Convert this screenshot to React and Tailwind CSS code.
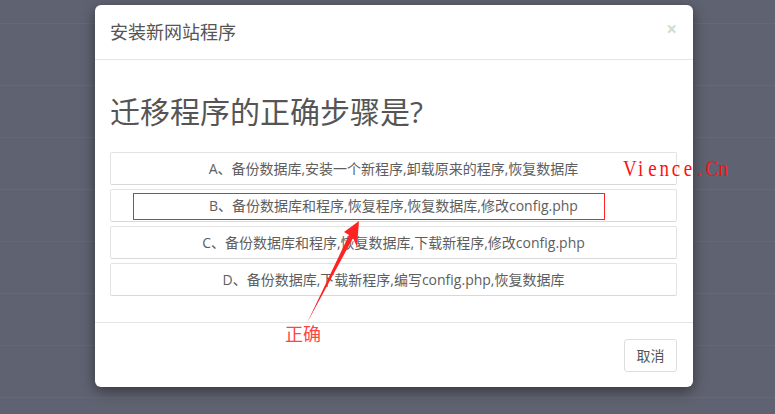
const options = [
  'A、备份数据库,安装一个新程序,卸载原来的程序,恢复数据库',
  'B、备份数据库和程序,恢复程序,恢复数据库,修改config.php',
  'C、备份数据库和程序,恢复数据库,下载新程序,修改config.php',
  'D、备份数据库,下载新程序,编写config.php,恢复数据库',
];

const App = () => {
  return (
    <div
      className="relative w-[775px] h-[414px] overflow-hidden bg-[#5f6270]"
      style={{ fontFamily: '"Open Sans", "Noto Sans CJK SC", sans-serif' }}
    >
      {/* page behind the overlay */}
      <div className="flex flex-col">
        <div className="h-[24px] border-b border-[#656877]" />
        <div className="h-[62px] border-b border-[#656877]" />
        {[0, 1, 2, 3, 4, 5].map((i) => (
          <div key={i} className="h-[52px] border-b border-[#656877]" />
        ))}
      </div>

      {/* modal */}
      <div className="absolute left-[95px] top-[5px] w-[598px] h-[382px] bg-white rounded-[6px] shadow-[0_4px_14px_rgba(0,0,0,0.45)] flex flex-col">
        <div className="h-[55px] shrink-0 flex items-center justify-between pl-[15px] pr-[16px] border-b border-[#e5e5e5]">
          <span className="text-[18px] text-[#555] leading-none">安装新网站程序</span>
          <span className="text-[19px] font-bold text-[#cfdfcf] leading-none -mt-[6px]">×</span>
        </div>

        <div className="flex-1 px-[15px] pt-[35px]">
          <h2 className="text-[30px] leading-[33px] text-[#555] font-normal mb-[24px]">
            迁移程序的正确步骤是?
          </h2>
          <div className="flex flex-col gap-[4px] pr-[1px]">
            {options.map((t) => (
              <div
                key={t}
                className="h-[33px] flex items-center justify-center border border-[#e3e3e3] border-b-[#d6d9dc] rounded-[2px] text-[14px] text-[#5e5e5e]"
              >
                {t}
              </div>
            ))}
          </div>
        </div>

        <div className="h-[65px] shrink-0 border-t border-[#e5e5e5] flex justify-end items-start pt-[16px] pr-[16px]">
          <button className="w-[53px] h-[33px] border border-[#ddd] rounded-[3px] bg-white text-[14px] text-[#555]">
            取消
          </button>
        </div>
      </div>

      {/* annotations */}
      <div className="absolute left-[133px] top-[193px] w-[472px] h-[27px] border border-[#f22]" />
      <div
        className="absolute left-[623px] top-[157px] flex text-[19px] leading-none text-[#ff1010] scale-y-[1.2] origin-top"
        style={{ fontFamily: '"Liberation Serif", serif' }}
      >
        {'Vience.Cn'.split('').map((c, i) => (
          <span key={i} className="w-[11.8px] text-center">
            {c}
          </span>
        ))}
      </div>
      <div className="absolute left-[285px] top-[325px] text-[18px] leading-none text-[#f44]">正确</div>
      <svg className="absolute left-0 top-0 pointer-events-none" width="775" height="414">
        <polygon points="359,221 344,232 349,235 307,323 353,238 357,247" fill="#f22" />
      </svg>
    </div>
  );
};

export default App;
